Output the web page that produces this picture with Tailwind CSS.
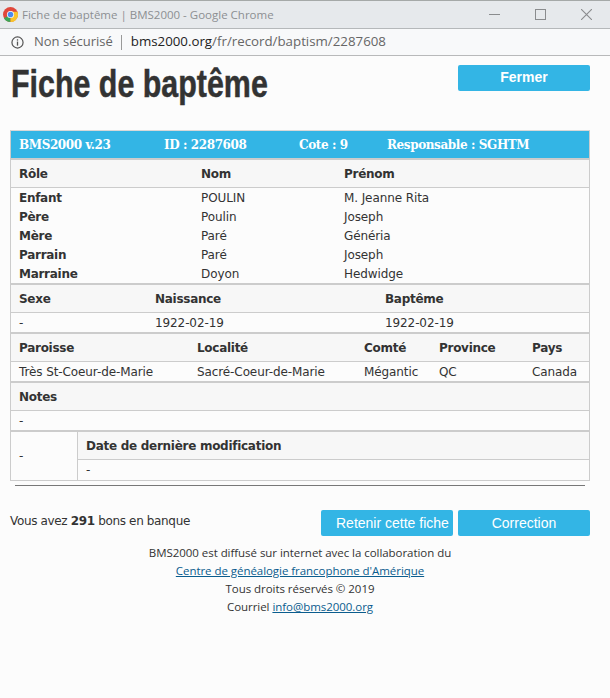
<!DOCTYPE html>
<html lang="fr">
<head>
    <meta charset="UTF-8">
    <title>Fiche de baptême | BMS2000</title>
    <script src="https://cdn.jsdelivr.net/npm/@tailwindcss/browser@4"></script>
</head>
<body class="w-[610px] h-[698px] overflow-hidden bg-[#fcfcfc] text-[#333] text-[12px] font-['DejaVu_Sans',sans-serif]">

    <!-- fenetre chrome -->
    <div class="h-[29px] bg-[#e6e9ec] border-t-[1px] border-t-[#a5a9a8] border-b border-b-[#b5b8ba] flex items-center pl-[3px] font-['Open_Sans',sans-serif] text-[11.5px] text-[#8c8f92]">
        <svg class="w-[15px] h-[15px]" viewBox="0 0 16 16">
            <circle cx="8" cy="8" r="8" fill="#e0483c"/>
            <path d="M8 8 L1 12 A8 8 0 0 0 8 16 Z" fill="#3ba757"/>
            <path d="M8 16 A8 8 0 0 0 15.5 5 L8 5 Z" fill="#f9c42d"/>
            <circle cx="8" cy="8" r="3.8" fill="#fff"/>
            <circle cx="8" cy="8" r="3" fill="#4a8bf0"/>
        </svg>
        <span class="ml-[4px]">Fiche de baptême | BMS2000 - Google Chrome</span>
        <div class="ml-auto flex items-center gap-[35px] pr-[18px]">
            <div class="w-[11px] h-[1px] bg-[#8a8c8e]"></div>
            <div class="w-[11px] h-[11px] border border-[#8a8c8e]"></div>
            <svg class="w-[11px] h-[11px]" viewBox="0 0 10 10"><path d="M0 0 L10 10 M10 0 L0 10" stroke="#8a8c8e" stroke-width="1" fill="none"/></svg>
        </div>
    </div>
    <div class="h-[27px] bg-[#f8f9fa] border-b border-[#b8b9ba] flex items-center pl-[11px] font-['Open_Sans',sans-serif] text-[13px] text-[#666]">
        <svg class="w-[13px] h-[13px]" viewBox="0 0 14 14" fill="none">
            <circle cx="7" cy="7" r="6" stroke="#555" stroke-width="1.3"/>
            <rect x="6.3" y="6" width="1.4" height="4.4" fill="#555"/>
            <rect x="6.3" y="3.5" width="1.4" height="1.5" fill="#555"/>
        </svg>
        <span class="ml-[10px]">Non sécurisé</span>
        <div class="w-px h-[15px] bg-[#999] ml-[8px] mr-[9px]"></div>
        <span class="text-[13.3px]"><span class="text-[#222]">bms2000.org</span>/fr/record/baptism/2287608</span>
    </div>

    <!-- titre -->
    <div class="h-[74px] flex justify-between items-start pl-[11px] pr-[20px]">
        <h1 class="font-['Liberation_Sans',sans-serif] font-bold text-[38px] leading-[40px] mt-[8px] text-[#333] whitespace-nowrap origin-left scale-x-[0.8] [-webkit-text-stroke:0.5px_#333]">Fiche de baptême</h1>
        <button class="w-[132px] h-[26px] mt-[9px] pb-[2px] rounded-[2px] bg-[#33b5e5] text-white font-bold text-[14px] font-['Liberation_Sans',sans-serif]">Fermer</button>
    </div>

    <!-- fiche -->
    <div class="mx-[10px] w-[580px] border border-[#ccc] border-t-[#d8d8d8] tracking-[-0.1px]">
        <div class="h-[29px] bg-[#33b5e5] border-b-2 border-[#ccc] flex items-center pl-[8px] text-white font-bold font-['DejaVu_Serif',serif] text-[12px] tracking-[-0.4px]">
            <span class="w-[145px]">BMS2000 v.23</span>
            <span class="w-[135px]">ID : 2287608</span>
            <span class="w-[88px]">Cote : 9</span>
            <span>Responsable : SGHTM</span>
        </div>

        <div class="h-[28px] bg-[#f7f7f7] border-b border-[#ccc] flex items-center pl-[8px] font-bold tracking-[-0.28px]">
            <span class="w-[182px]">Rôle</span>
            <span class="w-[143px]">Nom</span>
            <span>Prénom</span>
        </div>
        <div class="pl-[8px] grid grid-cols-[182px_143px_1fr] auto-rows-[19px] items-center h-[97px] border-b-2 border-[#ccc] [&>b]:tracking-[-0.28px]">
            <b>Enfant</b><span>POULIN</span><span>M. Jeanne Rita</span>
            <b>Père</b><span>Poulin</span><span>Joseph</span>
            <b>Mère</b><span>Paré</span><span>Généria</span>
            <b>Parrain</b><span>Paré</span><span>Joseph</span>
            <b>Marraine</b><span>Doyon</span><span>Hedwidge</span>
        </div>

        <div class="h-[28px] bg-[#f7f7f7] border-b border-[#ccc] flex items-center pl-[8px] font-bold tracking-[-0.28px]">
            <span class="w-[136px]">Sexe</span>
            <span class="w-[230px]">Naissance</span>
            <span>Baptême</span>
        </div>
        <div class="h-[21px] border-b-2 border-[#ccc] flex items-center pl-[8px]">
            <span class="w-[136px]">-</span>
            <span class="w-[230px]">1922-02-19</span>
            <span>1922-02-19</span>
        </div>

        <div class="h-[28px] bg-[#f7f7f7] border-b border-[#ccc] flex items-center pl-[8px] font-bold tracking-[-0.28px]">
            <span class="w-[178px]">Paroisse</span>
            <span class="w-[167px]">Localité</span>
            <span class="w-[75px]">Comté</span>
            <span class="w-[93px]">Province</span>
            <span>Pays</span>
        </div>
        <div class="h-[21px] border-b-2 border-[#ccc] flex items-center pl-[8px]">
            <span class="w-[178px]">Très St-Coeur-de-Marie</span>
            <span class="w-[167px]">Sacré-Coeur-de-Marie</span>
            <span class="w-[75px]">Mégantic</span>
            <span class="w-[93px]">QC</span>
            <span>Canada</span>
        </div>

        <div class="h-[28px] bg-[#f7f7f7] border-b border-[#ccc] flex items-center pl-[8px] font-bold tracking-[-0.28px]">Notes</div>
        <div class="h-[21px] border-b-2 border-[#ccc] flex items-center pl-[8px]">-</div>

        <div class="flex h-[48px]">
            <div class="w-[67px] border-r border-[#ccc] flex items-center pl-[8px]">-</div>
            <div class="flex-1">
                <div class="h-[28px] bg-[#f7f7f7] border-b border-[#ccc] flex items-center pl-[8px] font-bold tracking-[-0.28px]">Date de dernière modification</div>
                <div class="h-[20px] flex items-center pl-[8px]">-</div>
            </div>
        </div>
    </div>

    <div class="mx-[15px] w-[570px] h-px bg-[#777] mt-[4px]"></div>

    <div class="flex items-start mt-[24px] pl-[10px] pr-[20px]">
        <p class="mt-[2px] tracking-[-0.35px]">Vous avez <b>291</b> bons en banque</p>
        <div class="ml-auto flex gap-[5px] font-['Liberation_Sans',sans-serif] text-[14px] text-white">
            <button class="w-[132px] h-[26px] pl-[15px] rounded-[2px] bg-[#33b5e5] whitespace-nowrap text-left">Retenir cette fiche</button>
            <button class="w-[132px] h-[26px] rounded-[2px] bg-[#33b5e5]">Correction</button>
        </div>
    </div>

    <div class="mt-[8px] text-center leading-[18px] pr-[10px] font-['Open_Sans',sans-serif] text-[11.5px] tracking-[-0.05px]">
        <p>BMS2000 est diffusé sur internet avec la collaboration du</p>
        <p><a href="#" class="underline text-[#0b5d8e]">Centre de généalogie francophone d'Amérique</a></p>
        <p>Tous droits réservés © 2019</p>
        <p>Courriel <a href="#" class="underline text-[#0b5d8e]">info@bms2000.org</a></p>
    </div>
</body>
</html>
